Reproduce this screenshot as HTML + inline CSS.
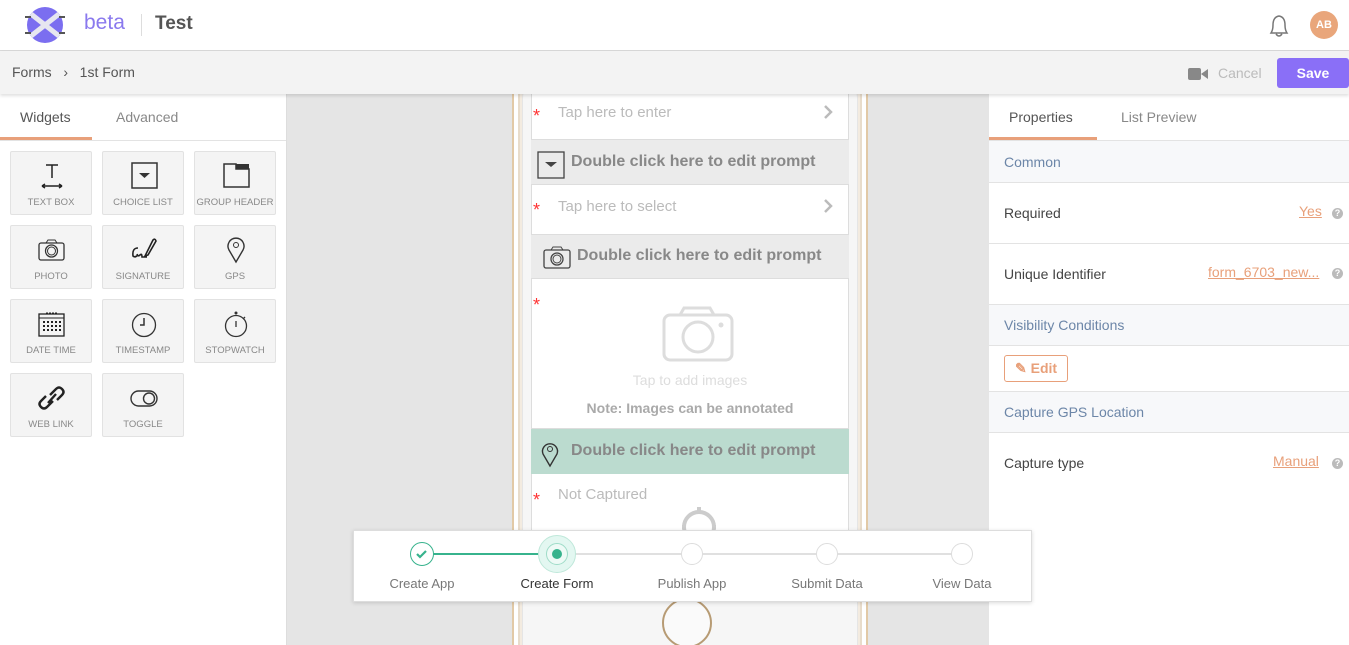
<!DOCTYPE html>
<html style="width:1349px;height:645px;overflow:hidden"><head><meta charset="utf-8"><style>
*{box-sizing:border-box;margin:0;padding:0}
body{width:1349px;height:645px;overflow:hidden;font-family:"Liberation Sans",sans-serif;background:#fff;position:relative;color:#444}
.a{position:absolute}
.hdr{left:0;top:0;width:1349px;height:51px;background:#fff;border-bottom:1px solid #d8d8d8;z-index:5}
.tb{left:0;top:51px;width:1349px;height:43px;background:#f3f3f3;box-shadow:0 2px 3px rgba(0,0,0,.12);z-index:5}
.left{left:0;top:94px;width:287px;height:551px;background:#fff;border-right:1px solid #ddd}
.mid{left:287px;top:94px;width:702px;height:551px;background:#e5e5e5;overflow:hidden}
.right{left:989px;top:94px;width:360px;height:551px;background:#fff}
.tab{font-size:14px;color:#888}
.w{width:82px;height:64px;background:#f4f4f4;border:1px solid #e2e2e2;border-radius:2px;text-align:center}
.w span{position:absolute;left:0;right:0;top:45px;font-size:9.5px;color:#888}
.w svg{position:absolute;left:26px;top:10px}
.sec{left:989px;width:360px;background:#f7f8fa;border-top:1px solid #e3e3e3;border-bottom:1px solid #e3e3e3;color:#6c86a8;font-size:14px;padding-left:15px}
.row{left:989px;width:360px;font-size:14px;color:#444;padding-left:15px}
.lk{color:#e8a07a;text-decoration:underline;font-size:14px}
.q{width:11px;height:11px;border-radius:50%;background:#bbb;color:#fff;font-size:9px;font-weight:bold;text-align:center;line-height:11px}
.scr{left:244px;width:318px}
.ph{font-size:16px;color:#888;font-weight:bold}
.tap{font-size:15px;color:#bbb}
.ast{color:#f33;font-size:18px;left:246px}
.st{width:24px;height:24px;border-radius:50%;border:1px solid #ddd;background:#fff}
.sl{font-size:13px;color:#777;width:140px;text-align:center}
.stp{z-index:10}
</style></head><body>
<div class="a hdr">
<svg class="a" style="left:22px;top:5px" width="46" height="40" viewBox="0 0 46 40"><circle cx="23" cy="20" r="18" fill="#7b6ef0"/><path d="M9 9 L37 31 M37 9 L9 31" stroke="#e6e6f0" stroke-width="5"/><path d="M3 12h6M3 28h6M37 12h6M37 28h6" stroke="#555" stroke-width="2"/></svg>
<div class="a" style="left:84px;top:11px;font-size:21px;color:#8a79ee">beta</div>
<div class="a" style="left:141px;top:14px;width:1px;height:22px;background:#ddd"></div>
<div class="a" style="left:155px;top:13px;font-size:19px;color:#555;font-weight:bold">Test</div>
<svg class="a" style="left:1265px;top:11px" width="28" height="28" viewBox="0 0 28 28"><path d="M6 22 Q8 19 8 14 Q8 6 14 5 Q20 6 20 14 Q20 19 22 22 Z M11 23 Q14 27 17 23" fill="none" stroke="#777" stroke-width="1.5"/></svg>
<div class="a" style="left:1310px;top:11px;width:28px;height:28px;border-radius:50%;background:#e9a67b;color:#fff;font-size:11px;font-weight:bold;text-align:center;line-height:28px">AB</div>
</div>
<div class="a tb">
<div class="a" style="left:12px;top:13px;font-size:14px;color:#555">Forms &nbsp;&nbsp;›&nbsp;&nbsp; 1st Form</div>
<svg class="a" style="left:1188px;top:16px" width="20" height="14" viewBox="0 0 20 14"><rect x="0" y="1" width="13" height="12" rx="2" fill="#888"/><path d="M13 7 L20 2 V12 Z" fill="#888"/></svg>
<div class="a" style="left:1218px;top:14px;font-size:14px;color:#bbb">Cancel</div>
<div class="a" style="left:1277px;top:7px;width:72px;height:30px;background:#8a6ff7;border-radius:3px;color:#fff;font-weight:bold;font-size:14px;text-align:center;line-height:30px">Save</div>
</div>

<div class="a left"></div>
<div class="a tab" style="left:20px;top:109px;color:#555">Widgets</div>
<div class="a tab" style="left:116px;top:109px">Advanced</div>
<div class="a" style="left:0;top:137px;width:92px;height:3px;background:#e8a07a"></div>
<div class="a" style="left:0;top:140px;width:286px;height:1px;background:#e3e3e3"></div>

<div class="a w" style="left:10px;top:151px"><svg width="30" height="28" viewBox="0 0 30 28"><path d="M9 3h12M15 3v13M5 24h20M5 24l3-2M5 24l3 2M25 24l-3-2M25 24l-3 2" stroke="#222" stroke-width="1.5" fill="none"/></svg><span>TEXT BOX</span></div>
<div class="a w" style="left:102px;top:151px"><svg width="30" height="28" viewBox="0 0 30 28"><rect x="3" y="1" width="25" height="25" fill="none" stroke="#333" stroke-width="1.5"/><path d="M10 11h11l-5.5 5z" fill="#333"/></svg><span>CHOICE LIST</span></div>
<div class="a w" style="left:194px;top:151px"><svg width="30" height="28" viewBox="0 0 30 28"><path d="M3 2h12v5h13v18H3z" fill="none" stroke="#333" stroke-width="1.5"/><rect x="15" y="2" width="13" height="5" fill="#333"/></svg><span>GROUP HEADER</span></div>
<div class="a w" style="left:10px;top:225px"><svg width="30" height="28" viewBox="0 0 30 28"><rect x="2" y="7" width="25" height="17" rx="2" fill="none" stroke="#333" stroke-width="1.3"/><path d="M9 7l2-3h7l2 3" fill="none" stroke="#333"/><circle cx="14.5" cy="15" r="6" fill="none" stroke="#333" stroke-width="1.3"/><circle cx="14.5" cy="15" r="4" fill="none" stroke="#333"/></svg><span>PHOTO</span></div>
<div class="a w" style="left:102px;top:225px"><svg width="30" height="28" viewBox="0 0 30 28"><path d="M9 12q-6 0-5 8 2 2 5-1M8 18q1 3 3 1t2 2h5M16 20l8-16q2-2 3 1l-8 14z" fill="none" stroke="#222" stroke-width="1.6"/></svg><span>SIGNATURE</span></div>
<div class="a w" style="left:194px;top:225px"><svg width="30" height="28" viewBox="0 0 30 28"><path d="M15 26 L8 14 A8 8 0 1 1 22 14 Z" fill="none" stroke="#333" stroke-width="1.4"/><circle cx="15" cy="9" r="2.5" fill="none" stroke="#333"/></svg><span>GPS</span></div>
<div class="a w" style="left:10px;top:299px"><svg width="30" height="28" viewBox="0 0 30 28"><rect x="2" y="4" width="25" height="22" fill="none" stroke="#222" stroke-width="1.3"/><path d="M2 8h25" stroke="#222"/><path d="M9 3h12" stroke="#222" stroke-dasharray="2 1"/><g fill="#222"><rect x="6" y="11" width="2" height="2"/><rect x="10" y="11" width="2" height="2"/><rect x="14" y="11" width="2" height="2"/><rect x="18" y="11" width="2" height="2"/><rect x="22" y="11" width="2" height="2"/><rect x="6" y="15" width="2" height="2"/><rect x="10" y="15" width="2" height="2"/><rect x="14" y="15" width="2" height="2"/><rect x="18" y="15" width="2" height="2"/><rect x="22" y="15" width="2" height="2"/><rect x="6" y="19" width="2" height="2"/><rect x="10" y="19" width="2" height="2"/><rect x="14" y="19" width="2" height="2"/><rect x="18" y="19" width="2" height="2"/><rect x="22" y="19" width="2" height="2"/></g></svg><span>DATE TIME</span></div>
<div class="a w" style="left:102px;top:299px"><svg width="30" height="28" viewBox="0 0 30 28"><circle cx="15" cy="15" r="11.5" fill="none" stroke="#333" stroke-width="1.3"/><path d="M15 8v7h-4" stroke="#333" stroke-width="1.5" fill="none"/></svg><span>TIMESTAMP</span></div>
<div class="a w" style="left:194px;top:299px"><svg width="30" height="28" viewBox="0 0 30 28"><circle cx="15" cy="16" r="10.5" fill="none" stroke="#333" stroke-width="1.3"/><circle cx="15" cy="3" r="1.5" fill="#333"/><path d="M15 5v1M15 11v6M24 7l-2 2" stroke="#333" stroke-width="1.3"/></svg><span>STOPWATCH</span></div>
<div class="a w" style="left:10px;top:373px"><svg width="30" height="28" viewBox="0 0 30 28"><path d="M13 11 L19 5 Q22 2 25 5 Q28 8 25 11 L20 16 M16 17 L10 23 Q7 26 4 23 Q1 20 4 17 L9 12 M11 19 L19 10" fill="none" stroke="#222" stroke-width="2.4"/></svg><span>WEB LINK</span></div>
<div class="a w" style="left:102px;top:373px"><svg width="30" height="28" viewBox="0 0 30 28"><rect x="2" y="7" width="26" height="15" rx="7.5" fill="none" stroke="#333" stroke-width="1.4"/><circle cx="20" cy="14.5" r="5.5" fill="none" stroke="#333" stroke-width="1.4"/></svg><span>TOGGLE</span></div>

<div class="a mid">
<div class="a" style="left:225px;top:-60px;width:356px;height:680px;border-radius:56px;background:#f3ebe0;border:2px solid #e2c9a6;box-shadow:inset 0 0 0 4px #fff,inset 0 0 0 6px #e8dccb"></div>
<div class="a" style="left:235px;top:-40px;width:336px;height:640px;border-radius:46px;background:#f6f6f6;border:1px solid #e5e5e5"></div>
<div class="a" style="left:244px;top:0;width:318px;height:436px;background:#fff;border-left:1px solid #ddd;border-right:1px solid #ddd"></div>
<div class="a" style="left:375px;top:504px;width:50px;height:50px;border-radius:50%;border:2px solid #b79b74;background:#fafafa"></div>

<div class="a scr" style="top:45px;height:46px;background:#ebebeb;border-top:1px solid #ddd;border-bottom:1px solid #ddd"></div>
<div class="a scr" style="top:140px;height:45px;background:#ebebeb;border-top:1px solid #ddd;border-bottom:1px solid #ddd"></div>
<div class="a scr" style="top:334px;height:46px;background:#bbdbcf;border-top:1px solid #ddd"></div>

<div class="a ast" style="top:12px">*</div>
<div class="a tap" style="left:271px;top:10px">Tap here to enter</div>
<svg class="a" style="left:535px;top:10px" width="12" height="16"><path d="M3 2l6 6-6 6" stroke="#bbb" stroke-width="2.5" fill="none"/></svg>
<svg class="a" style="left:250px;top:57px" width="28" height="28"><rect x="1" y="1" width="26" height="26" fill="none" stroke="#444" stroke-width="1.3"/><path d="M8 11h12l-6 5z" fill="#444"/></svg>
<div class="a ph" style="left:284px;top:59px">Double click here to edit prompt</div>
<div class="a ast" style="top:106px">*</div>
<div class="a tap" style="left:271px;top:104px">Tap here to select</div>
<svg class="a" style="left:535px;top:104px" width="12" height="16"><path d="M3 2l6 6-6 6" stroke="#bbb" stroke-width="2.5" fill="none"/></svg>
<svg class="a" style="left:256px;top:151px" width="28" height="24"><rect x="1" y="5" width="26" height="18" rx="2" fill="none" stroke="#444" stroke-width="1.3"/><path d="M8 5l2-3h8l2 3" fill="none" stroke="#444"/><circle cx="14" cy="14" r="6" fill="none" stroke="#444" stroke-width="1.3"/><circle cx="14" cy="14" r="4" fill="none" stroke="#444"/></svg>
<div class="a ph" style="left:290px;top:153px">Double click here to edit prompt</div>
<div class="a ast" style="top:201px">*</div>
<svg class="a" style="left:375px;top:212px" width="72" height="56"><rect x="2" y="9" width="68" height="45" rx="6" fill="none" stroke="#ddd" stroke-width="3"/><path d="M18 9l4-7h26l4 7" fill="none" stroke="#ddd" stroke-width="3"/><circle cx="36" cy="31" r="15" fill="none" stroke="#ddd" stroke-width="3"/><circle cx="59" cy="19" r="2.5" fill="#ddd"/></svg>
<div class="a" style="left:244px;width:318px;top:278px;text-align:center;font-size:14px;color:#ddd">Tap to add images</div>
<div class="a" style="left:244px;width:318px;top:306px;text-align:center;font-size:14px;color:#aaa;font-weight:bold">Note: Images can be annotated</div>
<svg class="a" style="left:252px;top:346px" width="22" height="28"><path d="M11 26 L4 14 A7.5 7.5 0 1 1 18 14 Z" fill="none" stroke="#333" stroke-width="1.4"/><circle cx="11" cy="9" r="2.5" fill="none" stroke="#333"/></svg>
<div class="a ph" style="left:284px;top:348px">Double click here to edit prompt</div>
<div class="a ast" style="top:396px">*</div>
<div class="a tap" style="left:271px;top:392px">Not Captured</div>
<svg class="a" style="left:391px;top:411px" width="42" height="26"><circle cx="21" cy="22" r="15" fill="none" stroke="#ccc" stroke-width="4"/><path d="M21 2v6M4 22h4M34 22h4" stroke="#ccc" stroke-width="4"/></svg>
</div>

<!-- right -->
<div class="a right"></div>
<div class="a tab" style="left:1009px;top:109px;color:#555">Properties</div>
<div class="a tab" style="left:1121px;top:109px">List Preview</div>
<div class="a" style="left:989px;top:137px;width:108px;height:3px;background:#e8a07a"></div>
<div class="a sec" style="top:140px;height:43px;line-height:42px">Common</div>
<div class="a row" style="top:183px;height:61px;line-height:60px;border-bottom:1px solid #e3e3e3">Required</div>
<div class="a lk" style="left:1299px;top:203px">Yes</div>
<div class="a q" style="left:1332px;top:208px">?</div>
<div class="a row" style="top:244px;height:61px;line-height:60px">Unique Identifier</div>
<div class="a lk" style="left:1208px;top:264px">form_6703_new...</div>
<div class="a q" style="left:1332px;top:268px">?</div>
<div class="a sec" style="top:304px;height:42px;line-height:41px">Visibility Conditions</div>
<div class="a" style="left:1004px;top:355px;width:64px;height:27px;border:1px solid #e8a07a;border-radius:3px;color:#e8a07a;font-size:14px;font-weight:bold;line-height:25px;padding-left:10px">✎ Edit</div>
<div class="a sec" style="top:391px;height:42px;line-height:41px">Capture GPS Location</div>
<div class="a row" style="top:433px;height:60px;line-height:60px">Capture type</div>
<div class="a lk" style="left:1273px;top:453px">Manual</div>
<div class="a q" style="left:1332px;top:458px">?</div>

<!-- stepper -->
<div class="a stp" style="left:353px;top:530px;width:679px;height:72px;background:#fff;border:1px solid #ddd;box-shadow:0 1px 4px rgba(0,0,0,.15)"></div>
<div class="a stp" style="left:422px;top:553px;width:135px;height:2px;background:#37b38d"></div>
<div class="a stp" style="left:557px;top:553px;width:405px;height:2px;background:#e0e0e0"></div>
<div class="a st stp" style="left:410px;top:542px;border:1.5px solid #37b38d"><svg width="21" height="21" style="position:absolute;left:0;top:0"><path d="M6 11l3 3 6-6" stroke="#37b38d" stroke-width="2.2" fill="none"/></svg></div>
<div class="a stp" style="left:538px;top:535px;width:38px;height:38px;border-radius:50%;background:#e3f7f1;border:1px solid #bfe8da"></div>
<div class="a stp" style="left:546px;top:543px;width:22px;height:22px;border-radius:50%;border:1px solid #9fdcc8;background:#eefaf6"></div>
<div class="a stp" style="left:552px;top:549px;width:10px;height:10px;border-radius:50%;background:#37b38d"></div>
<div class="a st stp" style="left:681px;top:543px;width:22px;height:22px"></div>
<div class="a st stp" style="left:816px;top:543px;width:22px;height:22px"></div>
<div class="a st stp" style="left:951px;top:543px;width:22px;height:22px"></div>
<div class="a sl stp" style="left:352px;top:576px">Create App</div>
<div class="a sl stp" style="left:487px;top:576px;color:#333">Create Form</div>
<div class="a sl stp" style="left:622px;top:576px">Publish App</div>
<div class="a sl stp" style="left:757px;top:576px">Submit Data</div>
<div class="a sl stp" style="left:892px;top:576px">View Data</div>
</body></html>
